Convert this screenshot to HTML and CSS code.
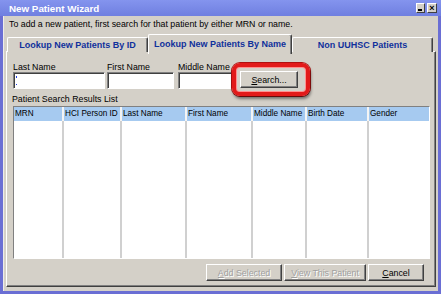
FILE: index.html
```html
<!DOCTYPE html>
<html lang="en">
<head>
    <meta charset="UTF-8">
    <title>New Patient Wizard</title>
    <link rel="stylesheet" href="styles.css">
</head>
<body>
<div class="window">
    <div class="titlebar">
        <span class="title">New Patient Wizard</span>
        <span class="tb-buttons">
            <span class="tb-btn tb-min"><span class="min-bar"></span></span>
            <span class="tb-btn tb-close">&#215;</span>
        </span>
    </div>
    <div class="client">
        <p class="intro">To add a new patient, first search for that patient by either MRN or name.</p>
        <div class="tabs">
            <div class="tab">Lookup New Patients By ID</div>
            <div class="tab selected">Lookup New Patients By Name</div>
            <div class="tab">Non UUHSC Patients</div>
        </div>
        <div class="panel">
            <div class="fields">
                <div class="field f-last">
                    <label for="lastName">Last Name</label>
                    <input type="text" id="lastName">
                    <span class="caret"></span>
                </div>
                <div class="field f-first">
                    <label for="firstName">First Name</label>
                    <input type="text" id="firstName">
                </div>
                <div class="field f-middle">
                    <label for="middleName">Middle Name</label>
                    <input type="text" id="middleName">
                </div>
                <div class="search-wrap">
                    <button class="btn search"><u>S</u>earch...</button>
                </div>
            </div>
            <div class="list-label">Patient Search Results List</div>
            <div class="grid">
                <div class="grid-head">
                    <div class="col c1">MRN</div>
                    <div class="col c2">HCI Person ID</div>
                    <div class="col c3">Last Name</div>
                    <div class="col c4">First Name</div>
                    <div class="col c5">Middle Name</div>
                    <div class="col c6">Birth Date</div>
                    <div class="col c7">Gender</div>
                </div>
                <div class="grid-body">
                    <div class="col c1"></div>
                    <div class="col c2"></div>
                    <div class="col c3"></div>
                    <div class="col c4"></div>
                    <div class="col c5"></div>
                    <div class="col c6"></div>
                    <div class="col c7"></div>
                </div>
            </div>
            <div class="actions">
                <button class="btn disabled b-add"><u>A</u>dd Selected</button>
                <button class="btn disabled b-view"><u>V</u>iew This Patient</button>
                <button class="btn b-cancel"><u>C</u>ancel</button>
            </div>
        </div>
    </div>
</div>
</body>
</html>
```

FILE: styles.css
```css
body {
    margin: 0;
    font-family: "Liberation Sans", Arial, sans-serif;
    font-size: 8.8px;
    color: #000;
    background: #6a6ed4;
}

.window {
    width: 441px;
    height: 294px;
    display: flex;
    flex-direction: column;
    background: #6a6ed4;
}

.titlebar {
    height: 16px;
    display: flex;
    align-items: center;
    justify-content: space-between;
    background: linear-gradient(#8494ee, #6f7fe0);
    padding: 0 4px 0 9px;
}

.title {
    color: #fff;
    font-weight: bold;
    font-size: 9.8px;
    white-space: nowrap;
}

.tb-buttons {
    display: flex;
    gap: 2px;
    align-items: center;
}

.tb-btn {
    width: 7px;
    height: 8px;
    background: #d4d0c8;
    border: 1px solid;
    border-color: #fff #404040 #404040 #fff;
    font-size: 9px;
    line-height: 8px;
    text-align: center;
    position: relative;
}

.tb-close {
    width: 8px;
    font-weight: bold;
}

.min-bar {
    position: absolute;
    left: 1px;
    bottom: 1px;
    width: 4px;
    height: 2px;
    background: #000;
}

.client {
    flex: 1;
    margin: 0 3px 3px 3px;
    background: #d4d0c8;
    border-left: 1px solid #eeece8;
    display: flex;
    flex-direction: column;
    padding: 2px 2px 4px 2px;
}

.intro {
    margin: 0 0 3px 3px;
    line-height: 13px;
    white-space: nowrap;
}

.tabs {
    display: flex;
    height: 18px;
    margin-left: 1px;
    position: relative;
    z-index: 1;
}

.tab {
    width: 139px;
    height: 14px;
    margin-top: 3px;
    border: 1px solid;
    border-color: #fff #404040 transparent #fff;
    border-bottom: none;
    border-radius: 2px 2px 0 0;
    box-shadow: inset -1px 0 #808080;
    text-align: center;
    font-weight: bold;
    color: #10309c;
    font-size: 9px;
    line-height: 15px;
    white-space: nowrap;
    background: #d4d0c8;
}

.tab.selected {
    width: 142px;
    height: 18px;
    margin-top: 0;
    line-height: 19px;
    padding-bottom: 1px;
}

.panel {
    flex: 1;
    margin-top: -1px;
    border: 1px solid;
    border-color: #fff #404040 #404040 #fff;
    box-shadow: inset -1px -1px #808080;
    padding: 9px 5px 0 5px;
    display: flex;
    flex-direction: column;
}

.fields {
    display: flex;
    align-items: flex-end;
}

.field {
    display: flex;
    flex-direction: column;
    position: relative;
}

.field label {
    line-height: 12px;
    height: 11px;
    white-space: nowrap;
}

.field input {
    box-sizing: border-box;
    height: 17px;
    margin: 0;
    border: 1px solid;
    border-color: #808080 #fff #fff #808080;
    box-shadow: inset 1px 1px #404040;
    background: #fff;
    padding: 0;
}

.caret {
    position: absolute;
    left: 3px;
    bottom: 4px;
    width: 1px;
    height: 9px;
    border-top: 1px solid #2040e0;
    border-bottom: 1px solid #2040e0;
    box-sizing: border-box;
    background: linear-gradient(#2040e0 0 1px, transparent 1px);
}

.f-last {
    margin-left: 1px;
}

.f-last input {
    width: 92px;
}

.f-first {
    margin-left: 2px;
}

.f-first input {
    width: 67px;
}

.f-middle {
    margin-left: 4px;
}

.f-middle input {
    width: 55px;
}

.search-wrap {
    position: relative;
    margin-left: 7px;
}

.search-wrap::before {
    content: "";
    position: absolute;
    left: -8px;
    top: -8px;
    width: 70px;
    height: 25px;
    border: 4px solid #e21a1a;
    border-radius: 8px;
    box-shadow: 1px 3px 3px rgba(0, 0, 0, 0.45), inset 0 0 0 1px #ff9090, 0 0 0 1px #b01010;
}

.btn {
    box-sizing: border-box;
    height: 17px;
    margin: 0;
    padding: 0;
    font-family: "Liberation Sans", Arial, sans-serif;
    font-size: 8.8px;
    white-space: nowrap;
    background: #d4d0c8;
    border: 1px solid;
    border-color: #fff #404040 #404040 #fff;
    box-shadow: inset -1px -1px #808080;
    color: #000;
}

.search {
    width: 58px;
    margin-bottom: 1px;
}

.list-label {
    margin-top: 4px;
    line-height: 13px;
    height: 13px;
}

.grid {
    width: 417px;
    height: 153px;
    margin-left: 1px;
    border: 1px solid;
    border-color: #808080 #fff #fff #808080;
    box-sizing: border-box;
    display: flex;
    flex-direction: column;
    background: #fff;
    font-size: 8.2px;
}

.grid-head,
.grid-body {
    display: flex;
}

.grid-head {
    height: 14px;
    background: #a6caf0;
    line-height: 14px;
}

.grid-body {
    flex: 1;
}

.col {
    box-sizing: border-box;
    border-right: 2px solid #d0d0d0;
    padding-left: 1px;
    white-space: nowrap;
    overflow: hidden;
}

.grid-head .col {
    border-right-color: #f4f4f4;
}

.c1 { width: 50px; }
.c2 { width: 58px; }
.c3 { width: 65px; }
.c4 { width: 66px; }
.c5 { width: 54px; }
.c6 { width: 62px; }
.c7 { width: 60px; border-right: none; }

.actions {
    display: flex;
    justify-content: flex-end;
    gap: 2px;
    margin-top: 5px;
    padding-right: 6px;
}

.disabled {
    color: #a0a0a0;
    text-shadow: 1px 1px #fff;
}

.b-add {
    width: 76px;
}

.b-view {
    width: 82px;
}

.b-cancel {
    width: 56px;
}
```
